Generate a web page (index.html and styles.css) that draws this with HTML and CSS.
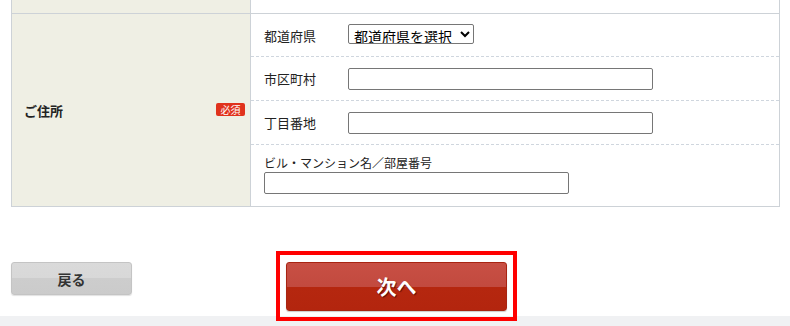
FILE: index.html
```html
<!DOCTYPE html>
<html lang="ja">
<head>
<meta charset="utf-8">
<title>ご住所</title>
<link rel="stylesheet" href="styles.css">
</head>
<body>
<div class="page">
  <div class="form">
    <div class="row prev">
      <div class="head"></div>
      <div class="body"></div>
    </div>
    <div class="row">
      <div class="head">
        <span class="head-label">ご住所</span>
        <span class="badge">必須</span>
      </div>
      <div class="body">
        <div class="sub first">
          <span class="sub-label">都道府県</span>
          <select class="pref">
            <option>都道府県を選択</option>
          </select>
        </div>
        <div class="sub">
          <span class="sub-label">市区町村</span>
          <input class="text" type="text">
        </div>
        <div class="sub">
          <span class="sub-label">丁目番地</span>
          <input class="text" type="text">
        </div>
        <div class="sub stacked">
          <span class="sub-label small">ビル・マンション名／部屋番号</span>
          <input class="text" type="text">
        </div>
      </div>
    </div>
  </div>
  <div class="actions">
    <button class="btn-back" type="button">戻る</button>
    <div class="next-wrap">
      <button class="btn-next" type="button">次へ</button>
    </div>
  </div>
  <div class="strip"></div>
</div>
</body>
</html>
```
FILE: styles.css
```css
html, body {
  margin: 0;
  padding: 0;
  background: #ffffff;
}
body {
  font-family: "Noto Sans CJK JP", "Noto Sans", sans-serif;
  color: #222;
  font-size: 13px;
  overflow: hidden;
}
.page {
  width: 790px;
  height: 326px;
  overflow: hidden;
}
.form {
  margin-left: 11px;
  width: 769px;
  border-left: 1px solid #cdd2d7;
  border-right: 1px solid #cdd2d7;
  border-bottom: 1px solid #cdd2d7;
  box-sizing: border-box;
}
.row {
  display: flex;
}
.row.prev {
  height: 13px;
  border-bottom: 1px solid #cdd2d7;
}
.head {
  width: 239px;
  flex: 0 0 239px;
  background: #efefe4;
  border-right: 1px solid #cdd2d7;
  display: flex;
  align-items: center;
  justify-content: space-between;
  padding: 0 5px 0 12px;
  box-sizing: border-box;
}
.head-label {
  font-weight: bold;
  font-size: 13px;
  color: #222;
}
.badge {
  background: #e0321c;
  color: #fff;
  font-size: 10px;
  line-height: 13px;
  height: 13px;
  width: 29px;
  text-align: center;
  border-radius: 2px;
  margin-top: -2px;
}
.body {
  flex: 1;
}
.sub {
  height: 44px;
  box-sizing: border-box;
  border-bottom: 1px dashed #cfd6de;
  display: flex;
  align-items: center;
  padding-left: 13px;
}
.sub.first {
  height: 43px;
}
.sub:last-child {
  border-bottom: none;
}
.sub-label {
  width: 84px;
  flex: 0 0 84px;
  font-size: 13px;
  color: #222;
}
.sub-label.small {
  width: auto;
  flex: none;
  font-size: 12px;
  line-height: 15px;
}
.sub.stacked {
  height: 61px;
  flex-direction: column;
  align-items: flex-start;
  justify-content: flex-start;
  padding-top: 10px;
}
.sub.stacked .text {
  margin-top: 2px;
}
.pref {
  width: 126px;
  height: 20px;
  font-family: "Noto Sans CJK JP", sans-serif;
  font-size: 14px;
  color: #000;
  border: 1px solid #767676;
  border-radius: 2px;
  padding: 0 0 0 1px;
  background: #fff;
  margin-top: -2px;
}
.text {
  width: 305px;
  height: 22px;
  box-sizing: border-box;
  border: 1px solid #767676;
  border-radius: 2px;
  padding: 0 4px;
  margin: 0;
  background: #fff;
}
.actions {
  height: 109px;
  display: flex;
  align-items: flex-start;
  padding-left: 11px;
}
.btn-back {
  margin-top: 55px;
  width: 121px;
  height: 33px;
  border: 1px solid #c4c4c4;
  border-radius: 3px;
  background: linear-gradient(#dadada 0%, #d8d8d8 50%, #cdcdcd 50%, #cbcbcb 100%);
  font-family: "Noto Sans CJK JP", sans-serif;
  font-weight: bold;
  font-size: 14px;
  color: #333;
  padding: 0;
  box-shadow: 0 1px 1px rgba(0, 0, 0, 0.12);
}
.next-wrap {
  position: relative;
  margin-top: 55px;
  margin-left: 154px;
}
.next-wrap::after {
  content: "";
  position: absolute;
  top: -11px;
  left: -10px;
  right: -10px;
  bottom: -10px;
  border: 4px solid #ff0000;
  pointer-events: none;
}
.btn-next {
  display: block;
  width: 221px;
  height: 49px;
  border: 1px solid #a82412;
  border-radius: 3px;
  background: linear-gradient(#c84f44 0%, #c24a3f 50%, #b5270f 50%, #b3250e 100%);
  font-family: "Noto Sans CJK JP", sans-serif;
  font-weight: bold;
  font-size: 20px;
  color: #fff;
  text-shadow: 1px 1px 1px rgba(60, 0, 0, 0.7);
  padding: 0;
  box-shadow: 0 1px 1px rgba(0, 0, 0, 0.2);
}
.strip {
  height: 10px;
  background: #f0f1f3;
}
```
